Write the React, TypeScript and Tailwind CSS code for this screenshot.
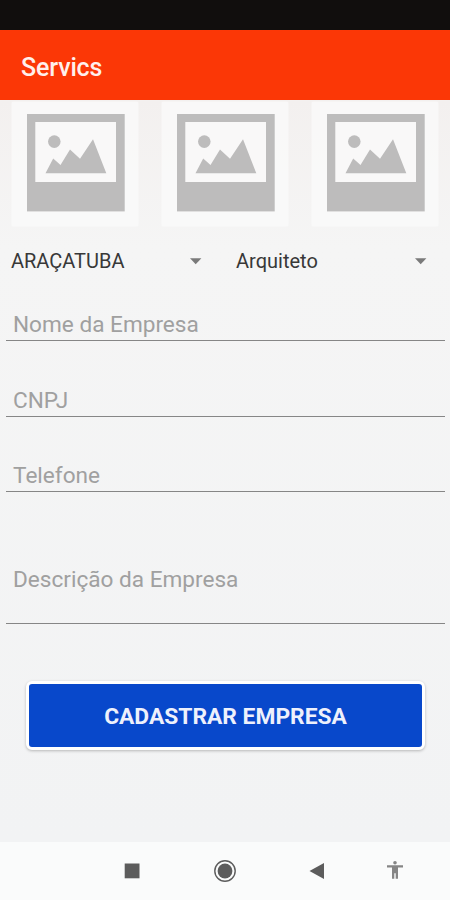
interface FieldProps {
  label: string;
  className: string;
}

function PlaceholderImage() {
  return (
    <div className="h-[124px] w-[126px] bg-[#fafafa]/80 shadow-[0_0_2px_rgba(255,255,255,0.8)]">
      <svg className="mt-[12px] ml-[15px] block" width="98" height="98" viewBox="0 0 98 98">
        <rect y="-0.3" width="97.7" height="97.7" fill="#bdbcbc" />
        <rect x="8.3" y="8" width="80.7" height="60" fill="#f9f8f8" />
        <circle cx="27.3" cy="27.6" r="6.3" fill="#bdbcbc" />
        <path d="M18.5 59.3 26.2 44.5 33.5 51 43 35.5 53 44.8 66 25.2 79.3 59.3Z" fill="#bdbcbc" />
      </svg>
    </div>
  );
}

function Spinner({ label }: { label: string }) {
  return (
    <button className="flex h-[60px] w-[225px] items-center justify-between pr-[23px] pl-[11px] text-[20px] text-[#383838]">
      <span>{label}</span>
      <svg width="12" height="7" viewBox="0 0 12 7">
        <path d="M0 0.3h11.4L5.7 6.3Z" fill="#7a7a7a" />
      </svg>
    </button>
  );
}

function Field({ label, className }: FieldProps) {
  return (
    <div className={`mr-[5px] ml-[6px] flex flex-col justify-end border-b border-[#868686] pl-[7px] text-[22.6px] leading-[26px] text-[#a0a0a0] ${className}`}>
      <span>{label}</span>
    </div>
  );
}

export default function App() {
  return (
    <div className="flex h-[900px] w-[450px] flex-col overflow-hidden bg-[#f4f4f4] font-['Roboto',sans-serif]">
      <div className="h-[30px] shrink-0 bg-[#110e0d]" />
      <header className="flex h-[70px] shrink-0 items-center bg-[#fb3706] pt-[5px] pl-[21px]">
        <h1 className="text-[25px] font-medium tracking-[-0.15px] text-[#fff0ec]">Servics</h1>
      </header>

      <main className="flex h-[742px] shrink-0 flex-col bg-linear-to-b from-[#f3f0ef] via-[#f5f5f5] via-20% to-[#f2f3f4]">
        <div className="flex gap-6 pt-[2px] pl-3">
          <PlaceholderImage />
          <PlaceholderImage />
          <PlaceholderImage />
        </div>

        <div className="mt-[5px] flex">
          <Spinner label="ARAÇATUBA" />
          <Spinner label="Arquiteto" />
        </div>

        <Field label="Nome da Empresa" className="h-[50px] pb-[2px]" />
        <Field label="CNPJ" className="h-[76px] pb-[2px]" />
        <Field label="Telefone" className="h-[75px] pb-[2px]" />
        <Field label="Descrição da Empresa" className="h-[132px] pb-[30px]" />

        <button className="mt-[57px] ml-[26px] flex h-[69px] w-[399px] items-center justify-center rounded-md border-[3.5px] border-white bg-[#0848cb] pt-[3px] text-[22.8px] font-bold text-[#eef1fc] shadow-[0_1px_3px_rgba(0,0,0,0.25)]">
          CADASTRAR EMPRESA
        </button>
      </main>

      <nav className="flex h-[58px] shrink-0 items-center bg-[#fafbfb] text-[#5c5c5c]">
        <svg className="ml-[124px]" width="16" height="16" viewBox="0 0 16 16">
          <rect x="0.7" y="0.5" width="14.8" height="14.8" fill="currentColor" />
        </svg>
        <svg className="ml-[73px]" width="24" height="24" viewBox="0 0 24 24">
          <circle cx="12" cy="12" r="10.2" fill="none" stroke="currentColor" strokeWidth="1.4" />
          <circle cx="12" cy="12" r="7.4" fill="currentColor" />
        </svg>
        <svg className="ml-[72px]" width="16" height="18" viewBox="0 0 16 18">
          <path d="M15 1v16L0.5 9Z" fill="currentColor" />
        </svg>
        <svg className="mb-[2px] ml-[61px]" width="18" height="20" viewBox="0 0 18 20">
          <g fill="#858585">
            <circle cx="9" cy="2.7" r="1.8" />
            <path d="M1 5.2h16v2.2h-5v11.3H9.7v-5.5H8.3v5.5H6V7.4H1Z" />
          </g>
        </svg>
      </nav>
    </div>
  );
}
